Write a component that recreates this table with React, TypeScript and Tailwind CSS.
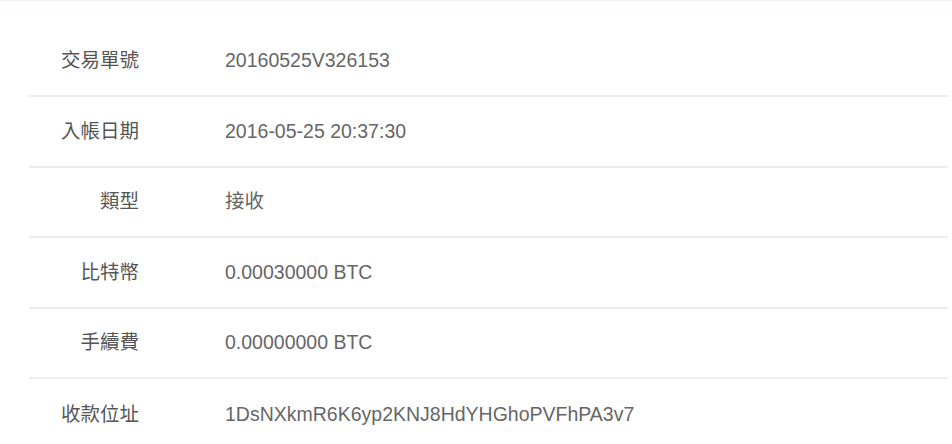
const rows = [
  { label: "交易單號", value: "20160525V326153" },
  { label: "入帳日期", value: "2016-05-25 20:37:30" },
  { label: "類型", value: "接收" },
  { label: "比特幣", value: "0.00030000 BTC" },
  { label: "手續費", value: "0.00000000 BTC" },
  { label: "收款位址", value: "1DsNXkmR6K6yp2KNJ8HdYHGhoPVFhPA3v7" },
];

const App = () => {
  return (
    <div className="w-[952px] h-[444px] bg-white overflow-hidden border-t border-[#f6eff7]">
      <div className="pt-[25.5px] pl-[29px] pr-[4px]">
        {rows.map((row, i) => (
          <div
            key={row.label}
            className={`flex items-center h-[70.5px] ${
              i < rows.length - 1 ? "border-b-2 border-[#eaecef]" : ""
            }`}
          >
            <div className="w-[110px] text-right text-[19.5px] text-[#555] font-['Liberation_Sans','Noto_Sans_CJK_TC',sans-serif]">
              {row.label}
            </div>
            <div className="ml-[86px] text-[19.5px] text-[#666] font-['Liberation_Sans','Noto_Sans_CJK_TC',sans-serif]">
              {row.value}
            </div>
          </div>
        ))}
      </div>
    </div>
  );
};

export default App;
